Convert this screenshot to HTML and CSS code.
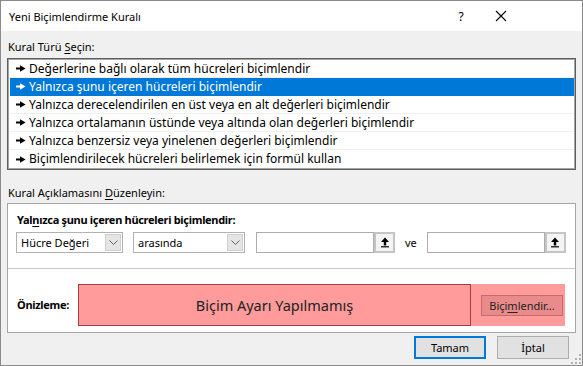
FILE: index.html
```html
<!DOCTYPE html>
<html lang="tr">
<head>
<meta charset="utf-8">
<title>Yeni Biçimlendirme Kuralı</title>
<link rel="stylesheet" href="styles.css">
</head>
<body>
<div class="win">
  <div class="titlebar">
    <span class="title">Yeni Biçimlendirme Kuralı</span>
    <span class="help">?</span>
    <span class="close"><svg width="12" height="12" viewBox="0 0 12 12"><path d="M1 1L11 11M11 1L1 11" stroke="#000" stroke-width="1.1" fill="none"/></svg></span>
  </div>
  <div class="content">
    <div class="label">Kural Türü <u>S</u>eçin:</div>
    <div class="list">
      <div class="row"><svg class="bullet" width="10" height="7" viewBox="0 0 10 7"><path d="M0 2.6h4.5v1.8H0z M4 0.3L9.6 3.5L4 6.7z" fill="currentColor"/></svg>Değerlerine bağlı olarak tüm hücreleri biçimlendir</div>
      <div class="row sel"><svg class="bullet" width="10" height="7" viewBox="0 0 10 7"><path d="M0 2.6h4.5v1.8H0z M4 0.3L9.6 3.5L4 6.7z" fill="currentColor"/></svg>Yalnızca şunu içeren hücreleri biçimlendir</div>
      <div class="row"><svg class="bullet" width="10" height="7" viewBox="0 0 10 7"><path d="M0 2.6h4.5v1.8H0z M4 0.3L9.6 3.5L4 6.7z" fill="currentColor"/></svg>Yalnızca derecelendirilen en üst veya en alt değerleri biçimlendir</div>
      <div class="row"><svg class="bullet" width="10" height="7" viewBox="0 0 10 7"><path d="M0 2.6h4.5v1.8H0z M4 0.3L9.6 3.5L4 6.7z" fill="currentColor"/></svg>Yalnızca ortalamanın üstünde veya altında olan değerleri biçimlendir</div>
      <div class="row"><svg class="bullet" width="10" height="7" viewBox="0 0 10 7"><path d="M0 2.6h4.5v1.8H0z M4 0.3L9.6 3.5L4 6.7z" fill="currentColor"/></svg>Yalnızca benzersiz veya yinelenen değerleri biçimlendir</div>
      <div class="row last"><svg class="bullet" width="10" height="7" viewBox="0 0 10 7"><path d="M0 2.6h4.5v1.8H0z M4 0.3L9.6 3.5L4 6.7z" fill="currentColor"/></svg>Biçimlendirilecek hücreleri belirlemek için formül kullan</div>
    </div>
    <div class="label label2">Kural Açıklamasını <u>D</u>üzenleyin:</div>
    <div class="panel">
      <div class="panel-top">
        <div class="heading">Yal<u>n</u>ızca şunu içeren hücreleri biçimlendir:</div>
        <div class="controls">
          <div class="combo c1"><span class="val">Hücre Değeri</span><span class="drop"><svg width="9" height="5" viewBox="0 0 9 5"><path d="M0.5 0.5L4.5 4.5L8.5 0.5" stroke="#606060" fill="none"/></svg></span></div>
          <div class="combo c2"><span class="val">arasında</span><span class="drop"><svg width="9" height="5" viewBox="0 0 9 5"><path d="M0.5 0.5L4.5 4.5L8.5 0.5" stroke="#606060" fill="none"/></svg></span></div>
          <div class="ref r1"><span class="field"></span><span class="refbtn"><svg width="10" height="11" viewBox="0 0 10 11"><path d="M5 0.5L9 5H6.2V8.5H3.8V5H1z" fill="#000"/><path d="M1 9.8h8" stroke="#000" stroke-width="1.2"/></svg></span></div>
          <span class="ve">ve</span>
          <div class="ref"><span class="field"></span><span class="refbtn"><svg width="10" height="11" viewBox="0 0 10 11"><path d="M5 0.5L9 5H6.2V8.5H3.8V5H1z" fill="#000"/><path d="M1 9.8h8" stroke="#000" stroke-width="1.2"/></svg></span></div>
        </div>
      </div>
      <div class="panel-bottom">
        <span class="prev-label">Önizleme:</span>
        <div class="preview">
          <div class="sample">Biçim Ayarı Yapılmamış</div>
          <button class="fmt">Biçi<u>m</u>lendir...</button>
        </div>
      </div>
    </div>
    <div class="footer">
      <button class="btn default">Tamam</button>
      <button class="btn">İptal</button>
    </div>
  </div>
  <svg class="grip" width="10" height="10" viewBox="0 0 10 10"><g fill="#b4b4b4"><rect x="8" y="0" width="2" height="2"/><rect x="4" y="4" width="2" height="2"/><rect x="8" y="4" width="2" height="2"/><rect x="0" y="8" width="2" height="2"/><rect x="4" y="8" width="2" height="2"/><rect x="8" y="8" width="2" height="2"/></g></svg>
</div>
</body>
</html>
```

FILE: styles.css
```css
html, body {
  margin: 0;
  padding: 0;
}
body {
  font-family: "Noto Sans", "Open Sans", sans-serif;
  font-size: 12px;
  color: #000;
  background: #f0f0f0;
}
u {
  text-decoration: underline;
  text-underline-offset: 2px;
}
.win {
  width: 583px;
  height: 366px;
  box-sizing: border-box;
  border: 1px solid #8a8a8a;
  background: #f0f0f0;
  position: relative;
  display: flex;
  flex-direction: column;
}
.titlebar {
  height: 30px;
  flex: none;
  background: #fff;
  display: flex;
  align-items: center;
  padding-left: 8px;
}
.title {
  flex: 1;
  font-size: 11px;
}
.help {
  width: 40px;
  text-align: center;
  font-size: 12px;
}
.close {
  width: 40px;
  height: 30px;
  display: flex;
  align-items: center;
  justify-content: center;
  margin-right: 61px;
}
.content {
  flex: 1;
  padding: 8px 6px 0 6px;
  display: flex;
  flex-direction: column;
}
.label {
  line-height: 16px;
  height: 16px;
  padding-left: 1px;
  font-size: 11px;
}
.label2 {
  margin-top: 15px;
}
.list {
  margin-top: 3px;
  background: #fff;
  border: 1px solid #5e5e5e;
  box-shadow: inset 0 0 0 1px #a5a5a5;
  padding: 1px;
}
.row {
  height: 18px;
  line-height: 18px;
  box-sizing: border-box;
  border-bottom: 1px solid #f0f0f0;
  padding-left: 6px;
  display: flex;
  align-items: center;
  white-space: nowrap;
  margin-left: 1px;
}
.row.last {
  border-bottom: none;
}
.row.sel {
  background: #0078d7;
  color: #fff;
  border-bottom-color: #0078d7;
}
.bullet {
  margin-right: 3px;
  flex: none;
}
.panel {
  margin-top: 2px;
  height: 130px;
  box-sizing: border-box;
  border: 1px solid #a6a6a6;
  background: #fff;
  display: flex;
  flex-direction: column;
}
.panel-top {
  height: 65px;
  box-sizing: border-box;
  padding: 8px 0 0 8px;
  border-bottom: 1px solid #c8c8c8;
}
.heading {
  font-weight: bold;
  font-size: 11px;
  letter-spacing: -0.3px;
  line-height: 16px;
  height: 16px;
  padding-left: 1px;
}
.controls {
  margin-top: 4px;
  display: flex;
  align-items: center;
  height: 21px;
  font-size: 11px;
}
.combo {
  height: 21px;
  box-sizing: border-box;
  border: 1px solid #b1b1b1;
  background: #fff;
  display: flex;
  align-items: center;
  justify-content: space-between;
  padding: 0 1px 0 4px;
}
.c1 {
  width: 107px;
}
.c2 {
  width: 112px;
  margin-left: 10px;
}
.drop {
  width: 16px;
  height: 17px;
  box-sizing: border-box;
  background: #e5e5e5;
  border: 1px solid #cfcfcf;
  display: flex;
  align-items: center;
  justify-content: center;
}
.ref {
  display: flex;
  width: 139px;
  height: 21px;
}
.r1 {
  margin-left: 11px;
}
.field {
  flex: 1;
  box-sizing: border-box;
  border: 1px solid #adadad;
  background: #fff;
}
.refbtn {
  width: 21px;
  height: 21px;
  box-sizing: border-box;
  border: 2px solid #c4c4c4;
  background: #f4f4f4;
  display: flex;
  align-items: center;
  justify-content: center;
}
.ve {
  margin: 0 10px;
  font-size: 11px;
}
.panel-bottom {
  flex: 1;
  display: flex;
  align-items: flex-start;
  padding: 15px 0 0 9px;
}
.prev-label {
  width: 61px;
  font-weight: bold;
  font-size: 11px;
  letter-spacing: -0.3px;
  line-height: 42px;
}
.preview {
  width: 487px;
  height: 42px;
  background: #ff9b9b;
  display: flex;
  align-items: center;
}
.sample {
  width: 393px;
  height: 42px;
  box-sizing: border-box;
  border: 1px solid #a63c3c;
  display: flex;
  align-items: center;
  justify-content: center;
  font-size: 14.5px;
  color: #222;
}
.fmt {
  margin-left: 10px;
  width: 82px;
  height: 21px;
  box-sizing: border-box;
  border: 1px solid #c86a6a;
  background: #e98b8b;
  font-family: inherit;
  font-size: 11px;
  color: #222;
  padding: 0;
}
.footer {
  margin-top: 3px;
  display: flex;
  justify-content: flex-end;
  padding-right: 7px;
  gap: 11px;
}
.btn {
  width: 72px;
  height: 23px;
  box-sizing: border-box;
  border: 1px solid #adadad;
  background: #e1e1e1;
  font-family: inherit;
  font-size: 11px;
  color: #000;
  padding: 0;
}
.btn.default {
  border: 2px solid #0078d7;
}
.grip {
  position: absolute;
  right: 1px;
  bottom: 1px;
}
```
